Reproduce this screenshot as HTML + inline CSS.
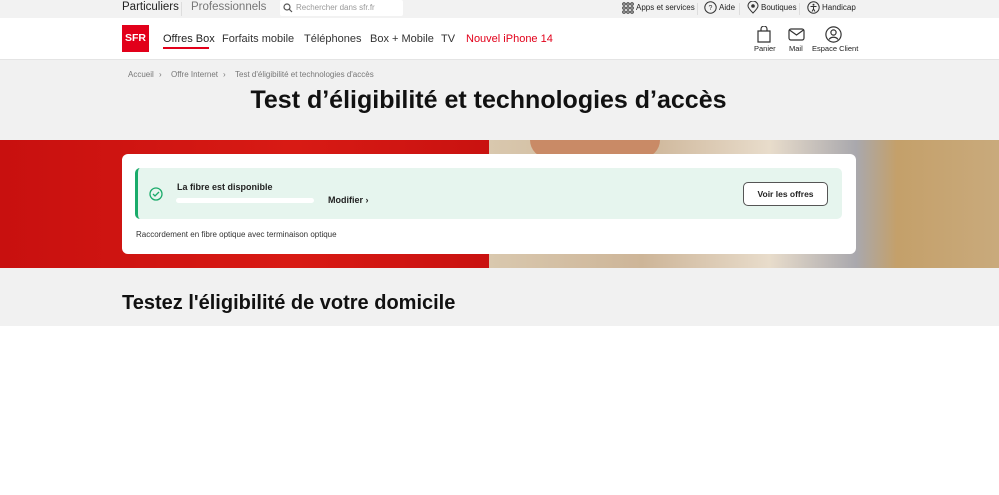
<!DOCTYPE html>
<html><head><meta charset="utf-8"><style>
*{margin:0;padding:0;box-sizing:border-box}
body{width:999px;height:495px;background:#fff;font-family:"Liberation Sans",sans-serif;color:#222;position:relative;overflow:hidden}
.abs{position:absolute}
.top{left:0;top:0;width:999px;height:18px;background:#f2f2f2}
.nav{left:0;top:18px;width:999px;height:42px;background:#fff;border-bottom:1px solid #e4e4e4}
.gray{left:0;top:60px;width:999px;height:266px;background:#f1f1f1}
.t{font-size:11px;white-space:nowrap}
</style></head><body>
<div class="abs top"></div>
<div class="abs t" style="left:122px;top:1px;font-size:11.5px;color:#222">Particuliers</div>
<div class="abs" style="left:181px;top:2px;width:1px;height:14px;background:#ddd"></div>
<div class="abs t" style="left:191px;top:1px;font-size:11.5px;color:#777">Professionnels</div>
<div class="abs" style="left:280px;top:0;width:123px;height:16px;background:#fff;border-radius:2px"></div>
<svg class="abs" style="left:283px;top:3px" width="10" height="10" viewBox="0 0 10 10"><circle cx="4" cy="4" r="3" fill="none" stroke="#555" stroke-width="1.2"/><path d="M6.3 6.3L9 9" stroke="#555" stroke-width="1.2"/></svg>
<div class="abs t" style="left:296px;top:3px;font-size:8px;color:#999">Rechercher dans sfr.fr</div>
<svg class="abs" style="left:622px;top:2px" width="12" height="12" viewBox="0 0 12 12" fill="none" stroke="#333" stroke-width="1"><circle cx="2" cy="2" r="1.3"/><circle cx="6" cy="2" r="1.3"/><circle cx="10" cy="2" r="1.3"/><circle cx="2" cy="6" r="1.3"/><circle cx="6" cy="6" r="1.3"/><circle cx="10" cy="6" r="1.3"/><circle cx="2" cy="10" r="1.3"/><circle cx="6" cy="10" r="1.3"/><circle cx="10" cy="10" r="1.3"/></svg>
<div class="abs t" style="left:636px;top:3px;font-size:8px">Apps et services</div>
<svg class="abs" style="left:704px;top:1px" width="13" height="13" viewBox="0 0 13 13"><circle cx="6.5" cy="6.5" r="5.7" fill="none" stroke="#333"/><text x="6.5" y="9" font-size="7" text-anchor="middle" fill="#333" font-family="Liberation Sans">?</text></svg>
<div class="abs t" style="left:719px;top:3px;font-size:8px">Aide</div>
<svg class="abs" style="left:747px;top:1px" width="12" height="13" viewBox="0 0 12 13"><path d="M6 12C2 8 1 6 1 5a5 5 0 0 1 10 0c0 1-1 3-5 7z" fill="none" stroke="#333"/><circle cx="6" cy="5" r="1.8" fill="#333"/></svg>
<div class="abs t" style="left:761px;top:3px;font-size:8px">Boutiques</div>
<svg class="abs" style="left:807px;top:1px" width="13" height="13" viewBox="0 0 13 13"><circle cx="6.5" cy="6.5" r="5.7" fill="none" stroke="#333"/><circle cx="6.5" cy="3.8" r="1" fill="#333"/><path d="M3.5 5.5h6M6.5 5.5v2.5l-1.5 2.5M6.5 8l1.5 2.5" stroke="#333" fill="none"/></svg>
<div class="abs t" style="left:822px;top:3px;font-size:8px">Handicap</div>
<div class="abs" style="left:697px;top:3px;width:1px;height:12px;background:#ddd"></div>
<div class="abs" style="left:739px;top:3px;width:1px;height:12px;background:#ddd"></div>
<div class="abs" style="left:799px;top:3px;width:1px;height:12px;background:#ddd"></div>

<div class="abs nav"></div>
<div class="abs" style="left:122px;top:25px;width:27px;height:27px;background:#e2001a;color:#fff;font-weight:bold;font-size:10.5px;line-height:27px;text-align:center">SFR</div>
<div class="abs t" style="left:163px;top:33px;font-size:11px">Offres Box</div>
<div class="abs" style="left:163px;top:47px;width:46px;height:2px;background:#e2001a"></div>
<div class="abs t" style="left:222px;top:33px;font-size:11px;color:#333">Forfaits mobile</div>
<div class="abs t" style="left:304px;top:33px;font-size:11px;color:#333">Téléphones</div>
<div class="abs t" style="left:370px;top:33px;font-size:11px;color:#333">Box + Mobile</div>
<div class="abs t" style="left:441px;top:33px;font-size:11px;color:#333">TV</div>
<div class="abs t" style="left:466px;top:33px;font-size:11px;color:#e2001a">Nouvel iPhone 14</div>
<svg class="abs" style="left:757px;top:26px" width="14" height="17" viewBox="0 0 14 17"><path d="M1 5h12v11H1z" fill="none" stroke="#333" stroke-width="1.2"/><path d="M4 5V3a3 3 0 0 1 6 0v2" fill="none" stroke="#333" stroke-width="1.2"/></svg>
<div class="abs t" style="left:754px;top:44px;font-size:7.5px">Panier</div>
<svg class="abs" style="left:788px;top:28px" width="17" height="13" viewBox="0 0 17 13"><rect x="1" y="1" width="15" height="11" rx="2" fill="none" stroke="#333" stroke-width="1.2"/><path d="M1.5 2l7 5 7-5" fill="none" stroke="#333" stroke-width="1.2"/></svg>
<div class="abs t" style="left:789px;top:44px;font-size:7.5px">Mail</div>
<svg class="abs" style="left:825px;top:26px" width="17" height="17" viewBox="0 0 17 17"><circle cx="8.5" cy="8.5" r="7.6" fill="none" stroke="#333" stroke-width="1.2"/><circle cx="8.5" cy="6.5" r="2.6" fill="none" stroke="#333" stroke-width="1.2"/><path d="M4 13.5a5 4 0 0 1 9 0" fill="none" stroke="#333" stroke-width="1.2"/></svg>
<div class="abs t" style="left:812px;top:44px;font-size:7.5px">Espace Client</div>

<div class="abs gray"></div>
<div class="abs t" style="left:128px;top:70px;font-size:8px;color:#777">Accueil</div>
<div class="abs t" style="left:159px;top:70px;font-size:8px;color:#777">›</div>
<div class="abs t" style="left:171px;top:70px;font-size:8px;color:#777">Offre Internet</div>
<div class="abs t" style="left:223px;top:70px;font-size:8px;color:#777">›</div>
<div class="abs t" style="left:235px;top:70px;font-size:8px;color:#777">Test d'éligibilité et technologies d'accès</div>
<div class="abs t" style="left:0;width:977px;text-align:center;top:86px;font-size:25px;font-weight:bold;color:#111">Test d’éligibilité et technologies d’accès</div>

<div class="abs" style="left:0;top:140px;width:489px;height:128px;background:linear-gradient(90deg,#c8100f,#d81a14 60%,#c91210)"></div>
<div class="abs" style="left:489px;top:140px;width:510px;height:128px;background:linear-gradient(90deg,#d9c8ae 0%,#cdb598 30%,#e8dccb 55%,#a9a8ad 72%,#c4a06a 80%,#c9aa7c 100%)"></div>
<div class="abs" style="left:530px;top:140px;width:130px;height:18px;background:#c98a66;border-radius:0 0 40px 40px"></div>

<div class="abs" style="left:122px;top:154px;width:734px;height:100px;background:#fff;border-radius:6px"></div>
<div class="abs" style="left:135px;top:168px;width:707px;height:51px;background:#e6f5ee;border-radius:5px;border-left:3px solid #1aab6a"></div>
<svg class="abs" style="left:149px;top:187px" width="14" height="14" viewBox="0 0 14 14"><circle cx="7" cy="7" r="6" fill="none" stroke="#1aab6a" stroke-width="1.3"/><path d="M4 7l2 2 4-4" fill="none" stroke="#1aab6a" stroke-width="1.3"/></svg>
<div class="abs t" style="left:177px;top:182px;font-size:9px;font-weight:bold">La fibre est disponible</div>
<div class="abs" style="left:176px;top:198px;width:138px;height:5px;background:#fff;border-radius:3px"></div>
<div class="abs t" style="left:328px;top:195px;font-size:9px;font-weight:bold">Modifier ›</div>
<div class="abs" style="left:743px;top:182px;width:85px;height:24px;border:1px solid #555;border-radius:5px;background:#fff;font-size:8.5px;font-weight:bold;text-align:center;line-height:22px">Voir les offres</div>
<div class="abs t" style="left:136px;top:230px;font-size:8px;color:#333">Raccordement en fibre optique avec terminaison optique</div>

<div class="abs t" style="left:122px;top:292px;font-size:20px;font-weight:bold;color:#111">Testez l'éligibilité de votre domicile</div>
</body></html>
